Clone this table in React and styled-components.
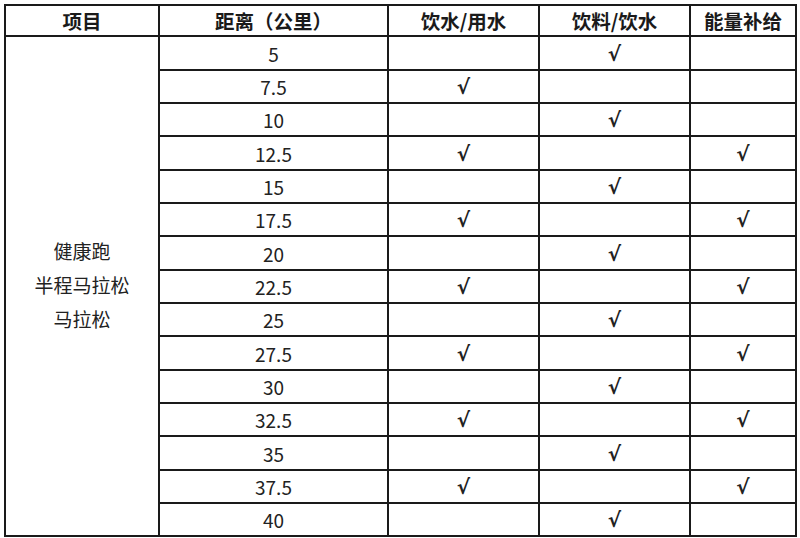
import React from "react";
import styled, { createGlobalStyle } from "styled-components";

const Global = createGlobalStyle`
  html, body { margin: 0; padding: 0; background: #fff; }
  body { font-family: "Noto Sans CJK SC", "Noto Sans", sans-serif; color: #222; }
`;

const Page = styled.div`
  padding: 4px 0 0 4px;
  width: 800px;
  height: 538px;
  box-sizing: border-box;
  overflow: hidden;
`;

const Table = styled.table`
  border-collapse: collapse;
  table-layout: fixed;
  width: 791px;
  font-size: 19px;
`;

const Th = styled.th`
  border: 2px solid #1a1a1a;
  height: 29px;
  padding: 0;
  font-weight: 700;
  font-size: 19.5px;
  text-align: center;
  vertical-align: middle;
  line-height: 29px;
  color: #1a1a1a;
`;

const Td = styled.td`
  border: 2px solid #1a1a1a;
  height: ${(p) => p.$h}px;
  padding: 0;
  text-align: center;
  vertical-align: middle;
  line-height: 1;
  color: #222;
`;

const Group = styled.td`
  border: 2px solid #1a1a1a;
  padding: 0 0 2px;
  text-align: center;
  vertical-align: middle;
  line-height: 34px;
  color: #222;
`;

const Check = styled.span`
  font-family: "DejaVu Sans", sans-serif;
  font-size: 20px;
  font-weight: 700;
`;

const rows = [
  ["5", 0, 1, 0],
  ["7.5", 1, 0, 0],
  ["10", 0, 1, 0],
  ["12.5", 1, 0, 1],
  ["15", 0, 1, 0],
  ["17.5", 1, 0, 1],
  ["20", 0, 1, 0],
  ["22.5", 1, 0, 1],
  ["25", 0, 1, 0],
  ["27.5", 1, 0, 1],
  ["30", 0, 1, 0],
  ["32.5", 1, 0, 1],
  ["35", 0, 1, 0],
  ["37.5", 1, 0, 1],
  ["40", 0, 1, 0],
];

const mark = (v) => (v ? <Check>√</Check> : null);

export default function App() {
  return (
    <Page>
      <Global />
      <Table>
        <colgroup>
          <col style={{ width: 154 }} />
          <col style={{ width: 229 }} />
          <col style={{ width: 151 }} />
          <col style={{ width: 151 }} />
          <col style={{ width: 106 }} />
        </colgroup>
        <thead>
          <tr>
            <Th>项目</Th>
            <Th>距离（公里）</Th>
            <Th>饮水/用水</Th>
            <Th>饮料/饮水</Th>
            <Th>能量补给</Th>
          </tr>
        </thead>
        <tbody>
          {rows.map((r, i) => {
            const h = i % 3 === 0 ? 32 : 31;
            return (
              <tr key={r[0]}>
                {i === 0 && (
                  <Group rowSpan={rows.length}>
                    健康跑
                    <br />
                    半程马拉松
                    <br />
                    马拉松
                  </Group>
                )}
                <Td $h={h}>{r[0]}</Td>
                <Td $h={h}>{mark(r[1])}</Td>
                <Td $h={h}>{mark(r[2])}</Td>
                <Td $h={h}>{mark(r[3])}</Td>
              </tr>
            );
          })}
        </tbody>
      </Table>
    </Page>
  );
}
